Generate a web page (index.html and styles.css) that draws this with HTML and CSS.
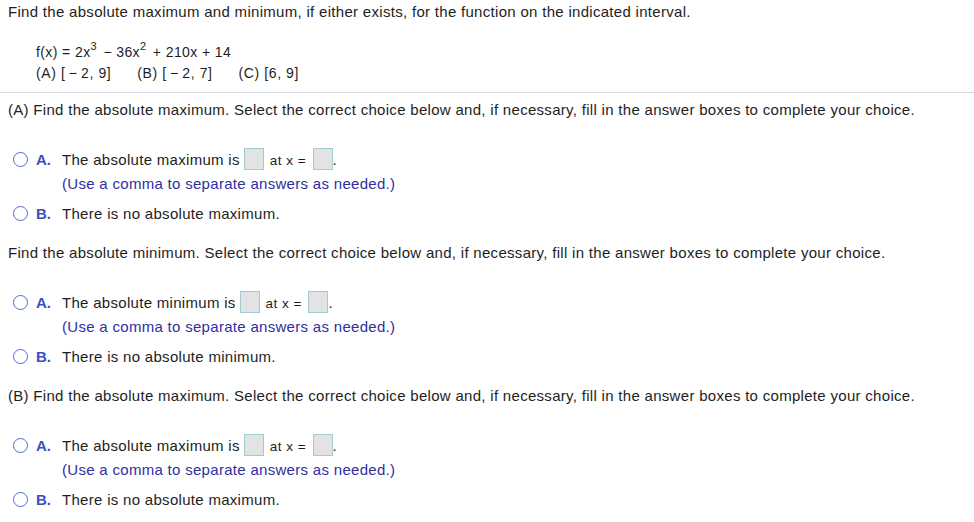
FILE: index.html
```html
<!DOCTYPE html>
<html lang="en">
  <head>
    <meta charset="UTF-8" />
    <title>Absolute extrema</title>
    <link rel="stylesheet" href="styles.css">
  </head>
  <body>
    <div id="problem">
      <p class="prompt">Find the absolute maximum and minimum, if either exists, for the function on the indicated interval.</p>

      <div class="func">
        <div class="func-line formula">f(x) = 2x<sup>3</sup> &minus; 36x<sup>2</sup> + 210x + 14</div>
        <div class="func-line intervals">
          <span>(A) [&thinsp;&minus;&thinsp;2, 9]</span>
          <span>(B) [&thinsp;&minus;&thinsp;2, 7]</span>
          <span>(C) [6, 9]</span>
        </div>
      </div>
    </div>

    <div class="divider"></div>

    <div id="answers">
      <!-- Part A max -->
      <p class="question">(A) Find the absolute maximum. Select the correct choice below and, if necessary, fill in the answer boxes to complete your choice.</p>
      <div class="choice">
        <span class="radio"></span>
        <span class="letter">A.</span>
        <div class="choice-body">
          <div class="answer-line">The absolute maximum is <span class="answer-box"></span> <span class="small">at x =</span> <span class="answer-box"></span>.</div>
          <div class="hint">(Use a comma to separate answers as needed.)</div>
        </div>
      </div>
      <div class="choice">
        <span class="radio"></span>
        <span class="letter">B.</span>
        <div class="choice-body">There is no absolute maximum.</div>
      </div>

      <!-- Part A min -->
      <p class="question">Find the absolute minimum. Select the correct choice below and, if necessary, fill in the answer boxes to complete your choice.</p>
      <div class="choice">
        <span class="radio"></span>
        <span class="letter">A.</span>
        <div class="choice-body">
          <div class="answer-line">The absolute minimum is <span class="answer-box"></span> <span class="small">at x =</span> <span class="answer-box"></span>.</div>
          <div class="hint">(Use a comma to separate answers as needed.)</div>
        </div>
      </div>
      <div class="choice">
        <span class="radio"></span>
        <span class="letter">B.</span>
        <div class="choice-body">There is no absolute minimum.</div>
      </div>

      <!-- Part B max -->
      <p class="question">(B) Find the absolute maximum. Select the correct choice below and, if necessary, fill in the answer boxes to complete your choice.</p>
      <div class="choice">
        <span class="radio"></span>
        <span class="letter">A.</span>
        <div class="choice-body">
          <div class="answer-line">The absolute maximum is <span class="answer-box"></span> <span class="small">at x =</span> <span class="answer-box"></span>.</div>
          <div class="hint">(Use a comma to separate answers as needed.)</div>
        </div>
      </div>
      <div class="choice">
        <span class="radio"></span>
        <span class="letter">B.</span>
        <div class="choice-body">There is no absolute maximum.</div>
      </div>
    </div>
  </body>
</html>
```

FILE: styles.css
```css
body {
  margin: 0;
  padding: 0;
  background: #fff;
  color: #1e1e1e;
  font-family: 'Liberation Sans', Arial, sans-serif;
  font-size: 15px;
  letter-spacing: 0.3px;
  overflow: hidden;
}

p {
  margin: 0;
}

#problem {
  padding: 4px 8px 0;
}

.prompt {
  line-height: 16px;
}

.func {
  padding: 22px 0 0 28px;
  font-size: 14px;
  letter-spacing: 0.6px;
}

.func-line {
  line-height: 21px;
}

.formula {
  letter-spacing: 0.4px;
}

.func sup {
  font-size: 11px;
  line-height: 0;
  vertical-align: 7px;
  margin-right: 2px;
}

.intervals {
  display: flex;
  gap: 26px;
}

.divider {
  height: 1px;
  margin-top: 8px;
  background: #d6d9e6;
}

#answers {
  padding: 9px 8px 0;
}

.question {
  line-height: 16px;
  margin-bottom: 30px;
}

.choice {
  display: flex;
  align-items: flex-start;
  line-height: 24px;
  margin-bottom: 6px;
}

.choice + .choice {
  margin-bottom: 19px;
}

.radio {
  width: 13px;
  height: 13px;
  border: 1.5px solid #4a6bd6;
  border-radius: 50%;
  margin: 4px 0 0 5px;
  flex-shrink: 0;
}

.letter {
  width: 26px;
  margin-left: 8px;
  color: #3b4ec2;
  font-weight: bold;
  letter-spacing: 0;
  flex-shrink: 0;
}

.answer-line {
  height: 24px;
}

.hint {
  color: #2f2fa0;
}

.small {
  font-size: 13.5px;
  letter-spacing: 0.5px;
  margin-left: 1px;
}

.answer-box {
  display: inline-block;
  width: 18px;
  height: 20px;
  vertical-align: middle;
  margin-top: -4px;
  background: #e3e3e3;
  border: 1px solid #a2cbd5;
}

.small + .answer-box {
  margin-left: 2px;
}
```
